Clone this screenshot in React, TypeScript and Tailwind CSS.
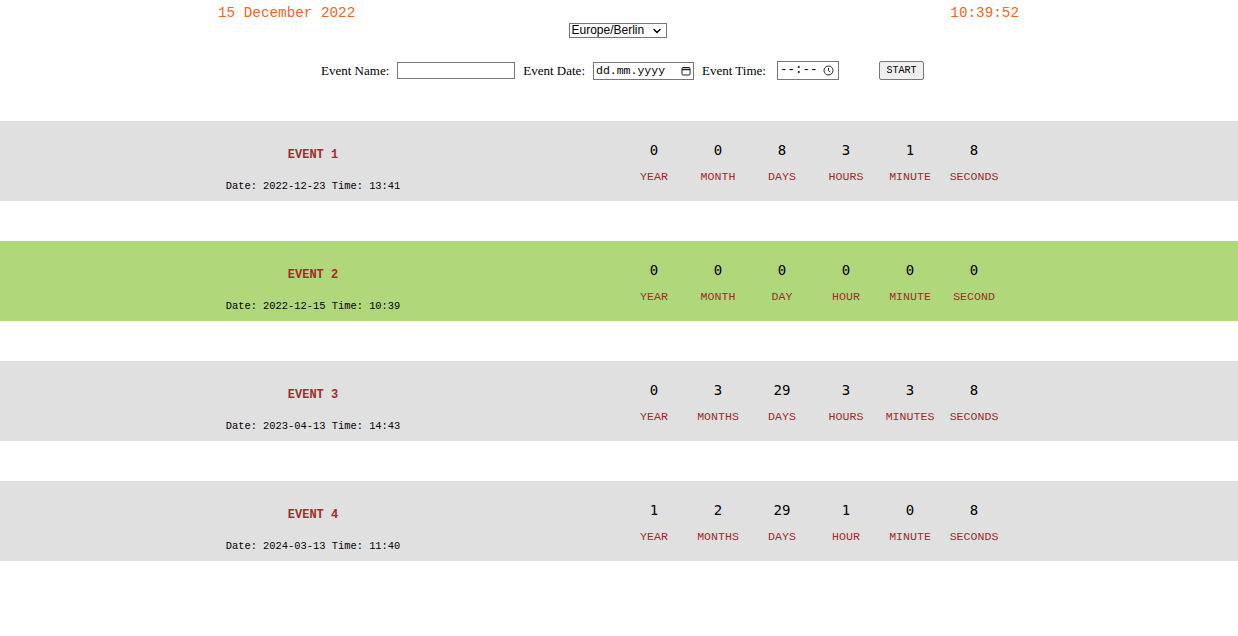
import { ChevronDown } from "lucide-react";

type Unit = { value: number; label: string };
type EventRow = { name: string; date: string; time: string; done?: boolean; units: Unit[] };

const events: EventRow[] = [
  {
    name: "EVENT 1",
    date: "2022-12-23",
    time: "13:41",
    units: [
      { value: 0, label: "YEAR" },
      { value: 0, label: "MONTH" },
      { value: 8, label: "DAYS" },
      { value: 3, label: "HOURS" },
      { value: 1, label: "MINUTE" },
      { value: 8, label: "SECONDS" },
    ],
  },
  {
    name: "EVENT 2",
    date: "2022-12-15",
    time: "10:39",
    done: true,
    units: [
      { value: 0, label: "YEAR" },
      { value: 0, label: "MONTH" },
      { value: 0, label: "DAY" },
      { value: 0, label: "HOUR" },
      { value: 0, label: "MINUTE" },
      { value: 0, label: "SECOND" },
    ],
  },
  {
    name: "EVENT 3",
    date: "2023-04-13",
    time: "14:43",
    units: [
      { value: 0, label: "YEAR" },
      { value: 3, label: "MONTHS" },
      { value: 29, label: "DAYS" },
      { value: 3, label: "HOURS" },
      { value: 3, label: "MINUTES" },
      { value: 8, label: "SECONDS" },
    ],
  },
  {
    name: "EVENT 4",
    date: "2024-03-13",
    time: "11:40",
    units: [
      { value: 1, label: "YEAR" },
      { value: 2, label: "MONTHS" },
      { value: 29, label: "DAYS" },
      { value: 1, label: "HOUR" },
      { value: 0, label: "MINUTE" },
      { value: 8, label: "SECONDS" },
    ],
  },
];

const mono = "font-['Liberation_Mono','Courier_New',monospace]";
const serif = "font-['Liberation_Serif','Times_New_Roman',serif]";

function CalendarIcon() {
  return (
    <svg width="10" height="10" viewBox="0 0 10 10" fill="none" stroke="#222" strokeWidth="1">
      <rect x="1" y="1.5" width="8" height="7.5" rx="1" />
      <line x1="1" y1="3.5" x2="9" y2="3.5" strokeWidth="1.5" />
    </svg>
  );
}

function ClockIcon() {
  return (
    <svg width="11" height="11" viewBox="0 0 11 11" fill="none" stroke="#222" strokeWidth="1">
      <circle cx="5.5" cy="5.5" r="4.5" />
      <path d="M5.5 3v2.7l1.8 1.3" />
    </svg>
  );
}

function EventBar({ ev }: { ev: EventRow }) {
  return (
    <div className={`flex h-[80px] mb-[40px] ${ev.done ? "bg-[#b1d77b]" : "bg-[#e0e0e0]"}`}>
      <div className={`w-[622px] pl-[4px] flex flex-col items-center ${mono}`}>
        <div className="mt-[27px] text-[12px] leading-[14px] font-bold text-[#a52a2a]">{ev.name}</div>
        <div className="mt-[18px] text-[10.4px] leading-[12px] text-black">
          Date: {ev.date} Time: {ev.time}
        </div>
      </div>
      <div className="flex">
        {ev.units.map((u) => (
          <div key={u.label} className="w-[64px] flex flex-col items-center">
            <div className="mt-[21px] h-[16px] leading-[16px] text-[14px] text-black font-['DejaVu_Sans_Mono',monospace]">
              {u.value}
            </div>
            <div className={`mt-[12px] text-[11.6px] leading-[14px] text-[#a52a2a] ${mono}`}>{u.label}</div>
          </div>
        ))}
      </div>
    </div>
  );
}

export default function App() {
  return (
    <div className="min-h-[636px] bg-white">
      <div className={`w-[800px] mx-auto flex justify-between pt-[5px] text-[14.3px] leading-[16px] text-[#f26522] ${mono}`}>
        <span className="-ml-[1px]">15 December 2022</span>
        <span>10:39:52</span>
      </div>

      <div className="flex justify-center mt-[2px] pr-[3px]">
        <div className="relative w-[98px] h-[15px] border border-[#767676] bg-white">
          <span className="absolute left-[2px] top-[-1px] text-[12px] leading-[15px] text-black font-['Liberation_Sans',Arial,sans-serif]">
            Europe/Berlin
          </span>
          <ChevronDown className="absolute right-[3px] top-[1px] w-[12px] h-[12px] text-black" strokeWidth={3} />
        </div>
      </div>

      <div className={`flex justify-center items-center mt-[23px] pl-[7px] text-[13px] text-black ${serif}`}>
        <span>Event Name:</span>
        <div className="ml-[8px] w-[118px] h-[17px] border border-[#767676] bg-white" />
        <span className="ml-[8px]">Event Date:</span>
        <div className={`ml-[8px] w-[101px] h-[18px] border border-[#767676] bg-white flex items-center justify-between px-[2px] text-[11.5px] ${mono}`}>
          <span>dd.mm.yyyy</span>
          <CalendarIcon />
        </div>
        <span className="ml-[8px]">Event Time:</span>
        <div className={`ml-[11px] w-[62px] h-[19px] border border-[#767676] bg-white flex items-center justify-between pl-[2px] pr-[4px] text-[12.5px] ${mono}`}>
          <span>--:--</span>
          <ClockIcon />
        </div>
        <button
          className={`ml-[40px] w-[45px] h-[19px] border border-[#767676] rounded-[2px] bg-[#efefef] text-[10px] text-black ${mono}`}
        >
          START
        </button>
      </div>

      <div className="mt-[40px]">
        {events.map((ev) => (
          <EventBar key={ev.name} ev={ev} />
        ))}
      </div>
    </div>
  );
}
